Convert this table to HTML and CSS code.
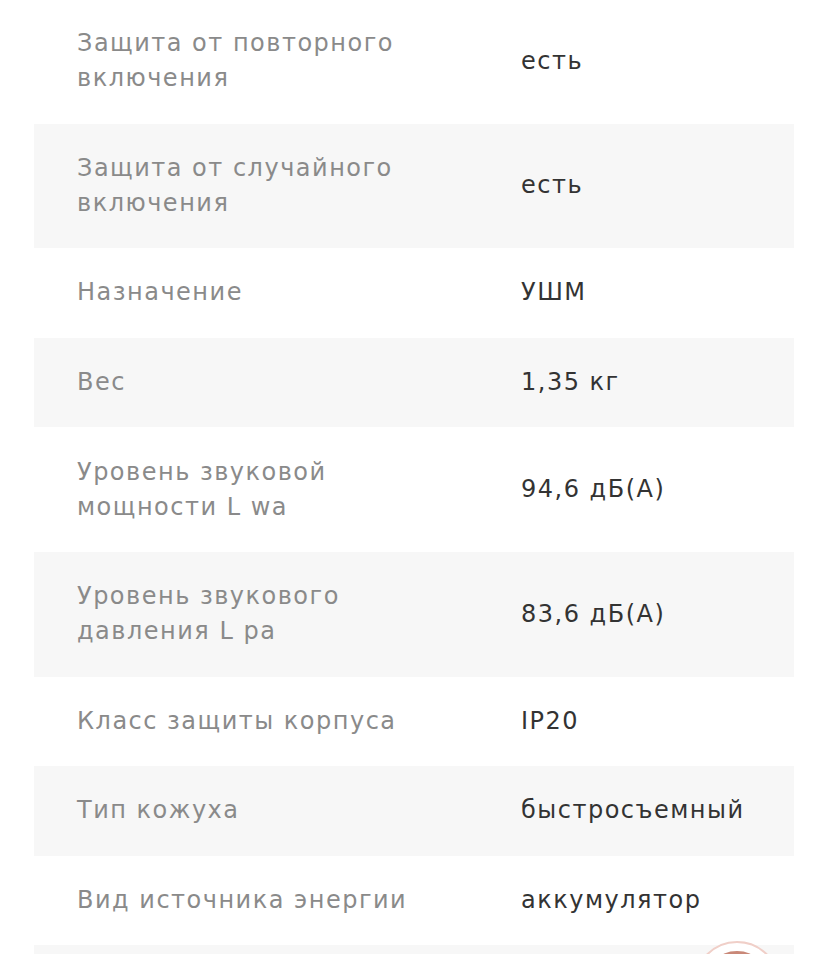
FILE: index.html
```html
<!DOCTYPE html>
<html lang="ru">
<head>
<meta charset="utf-8">
<link rel="stylesheet" href="styles.css">
</head>
<body>
<div class="specs">
  <div class="row"><div class="label">Защита от повторного включения</div><div class="value">есть</div></div>
  <div class="row alt"><div class="label">Защита от случайного включения</div><div class="value">есть</div></div>
  <div class="row"><div class="label">Назначение</div><div class="value">УШМ</div></div>
  <div class="row alt"><div class="label">Вес</div><div class="value">1,35 кг</div></div>
  <div class="row"><div class="label">Уровень звуковой мощности L wa</div><div class="value">94,6 дБ(А)</div></div>
  <div class="row alt"><div class="label">Уровень звукового давления L pa</div><div class="value">83,6 дБ(А)</div></div>
  <div class="row"><div class="label">Класс защиты корпуса</div><div class="value">IP20</div></div>
  <div class="row alt"><div class="label">Тип кожуха</div><div class="value">быстросъемный</div></div>
  <div class="row"><div class="label">Вид источника энергии</div><div class="value">аккумулятор</div></div>
  <div class="row alt"><div class="label">&nbsp;</div><div class="value">&nbsp;</div></div>
</div>
<div class="fab"><div class="fab-inner"></div></div>
</body>
</html>
```
FILE: styles.css
```css
html, body {
  margin: 0;
  padding: 0;
  background: #ffffff;
  overflow: hidden;
}
body {
  font-family: "DejaVu Sans", "Noto Sans", sans-serif;
  font-size: 24px;
  line-height: 35px;
  letter-spacing: 1.5px;
}
.specs {
  margin: -1px 34px 0 34px;
  width: 760px;
}
.row {
  display: grid;
  grid-template-columns: 444px 1fr;
  align-items: center;
  padding: 27.3px 43px;
}
.row.alt {
  background: #f7f7f7;
}
.label {
  color: #8a8a8a;
  max-width: 360px;
}
.value {
  color: #333333;
}
.fab {
  position: absolute;
  left: 694px;
  top: 941px;
  width: 82px;
  height: 82px;
  border-radius: 50%;
  border: 2px solid #f0cfc8;
  background: #ffffff;
  display: flex;
  align-items: center;
  justify-content: center;
}
.fab-inner {
  width: 66px;
  height: 66px;
  border-radius: 50%;
  border: 3px solid #c98878;
  box-sizing: border-box;
}
```
